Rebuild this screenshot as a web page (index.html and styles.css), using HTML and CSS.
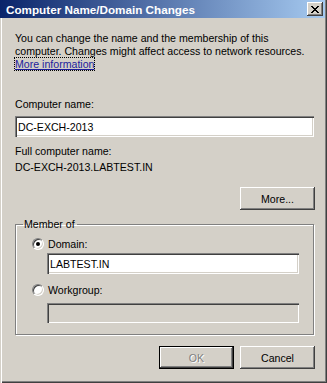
FILE: index.html
```html
<!DOCTYPE html>
<html lang="en">
<head>
    <meta charset="UTF-8">
    <title>Computer Name/Domain Changes</title>
    <link rel="stylesheet" href="styles.css">
</head>
<body>
    <div class="window">
        <header class="titlebar">
            <span class="title">Computer Name/Domain Changes</span>
            <button class="close-btn" aria-label="Close">
                <svg width="8" height="7" viewBox="0 0 8 7" shape-rendering="crispEdges">
                    <path fill="#000" d="M0 0h2v1h-2z M6 0h2v1h-2z M1 1h2v1h-2z M5 1h2v1h-2z M2 2h4v1h-4z M3 3h2v1h-2z M2 4h4v1h-4z M1 5h2v1h-2z M5 5h2v1h-2z M0 6h2v1h-2z M6 6h2v1h-2z"/>
                </svg>
            </button>
        </header>

        <div class="content">
            <p class="intro">
                You can change the name and the membership of this<br>
                computer. Changes might affect access to network resources.<br>
                <a class="link" href="#">More information</a>
            </p>

            <label class="label name-label" for="computerName">Computer name:</label>
            <input class="field" id="computerName" type="text" value="DC-EXCH-2013">

            <div class="label full-label">Full computer name:</div>
            <div class="label full-value">DC-EXCH-2013.LABTEST.IN</div>

            <div class="actions more-row">
                <button class="btn">More...</button>
            </div>

            <fieldset class="group">
                <legend>Member of</legend>
                <div class="group-body">
                    <div class="radio-row">
                        <span class="radio checked"></span>
                        <span>Domain:</span>
                    </div>
                    <input class="field sub-field" type="text" value="LABTEST.IN">

                    <div class="radio-row workgroup-row">
                        <span class="radio"></span>
                        <span>Workgroup:</span>
                    </div>
                    <input class="field sub-field workgroup-field" type="text" disabled>
                </div>
            </fieldset>

            <div class="actions footer">
                <button class="btn btn-default" disabled>OK</button>
                <button class="btn">Cancel</button>
            </div>
        </div>
    </div>
</body>
</html>
```

FILE: styles.css
```css
body {
    margin: 0;
    padding: 0;
    font-family: 'Liberation Sans', Arial, sans-serif;
    font-size: 10.6px;
    color: #000;
}

.window {
    width: 327px;
    height: 383px;
    box-sizing: border-box;
    background-color: #d4d0c8;
    display: flex;
    flex-direction: column;
    box-shadow: inset 1px 0 #d4d0c8, inset 2px 0 #fff, inset -1px -1px #404040, inset -2px -2px #808080;
}

.titlebar {
    height: 18px;
    margin-right: 2px;
    padding: 0 2px 0 6px;
    display: flex;
    align-items: center;
    justify-content: space-between;
    background: linear-gradient(to right, #0a246a, #a6caf0);
}

.title {
    color: #fff;
    font-weight: bold;
    font-size: 11.7px;
}

.close-btn {
    width: 16px;
    height: 14px;
    padding: 0;
    border: none;
    background-color: #d4d0c8;
    display: flex;
    align-items: center;
    justify-content: center;
    box-shadow: inset -1px -1px #404040, inset 1px 1px #fff, inset -2px -2px #808080;
}

.content {
    padding: 14px 12px 0 15px;
    display: flex;
    flex-direction: column;
}

.intro {
    margin: 0;
    line-height: 13px;
    white-space: nowrap;
}

.link {
    color: #1c1c9c;
    outline: 1px dotted #000;
}

.label {
    display: block;
    line-height: 13px;
}

.name-label {
    margin-top: 27px;
}

.full-label {
    margin-top: 8px;
}

.full-value {
    margin-top: 3px;
}

.field {
    box-sizing: border-box;
    height: 21px;
    width: 299px;
    margin: 5px 0 0;
    padding: 0 1px 0 3px;
    border: none;
    outline: none;
    background-color: #fff;
    font-family: inherit;
    font-size: 10.6px;
    color: #000;
    box-shadow: inset 1px 1px #808080, inset 2px 2px #404040, inset -1px -1px #fff, inset -2px -2px #d4d0c8;
}

.actions {
    display: flex;
    justify-content: flex-end;
    gap: 6px;
}

.more-row {
    margin-top: 13px;
}

.btn {
    width: 75px;
    height: 23px;
    box-sizing: border-box;
    padding: 0;
    border: none;
    background-color: #d4d0c8;
    font-family: inherit;
    font-size: 10.6px;
    color: #000;
    box-shadow: inset -1px -1px #404040, inset 1px 1px #fff, inset -2px -2px #808080;
}

.btn-default {
    border: 1px solid #000;
}

.btn:disabled {
    color: #808080;
    text-shadow: 1px 1px #fff;
}

.group {
    margin: 8px 1px 0 0;
    padding: 6px 13px 11px 7px;
    border: 1px solid #808080;
    box-shadow: inset 1px 1px #fff, 1px 1px #fff;
}

.group legend {
    padding: 0 2px 0 1px;
    line-height: 13px;
}

.group-body {
    padding-left: 9px;
    display: flex;
    flex-direction: column;
}

.radio-row {
    display: flex;
    align-items: center;
    gap: 4px;
    height: 13px;
}

.radio {
    width: 12px;
    height: 12px;
    box-sizing: border-box;
    border-radius: 50%;
    border: 1px solid;
    border-color: #808080 #fff #fff #808080;
    background-color: #fff;
    box-shadow: inset 1px 1px #404040, inset -1px -1px #d4d0c8;
    display: flex;
    align-items: center;
    justify-content: center;
}

.radio.checked::after {
    content: "";
    width: 4px;
    height: 4px;
    border-radius: 50%;
    background-color: #000;
}

.sub-field {
    width: 252px;
    margin: 3px 0 0 15px;
}

.workgroup-row {
    margin-top: 9px;
}

.workgroup-field {
    margin-top: 7px;
    height: 20px;
    background-color: #d4d0c8;
}

.footer {
    margin-top: 11px;
}
```
